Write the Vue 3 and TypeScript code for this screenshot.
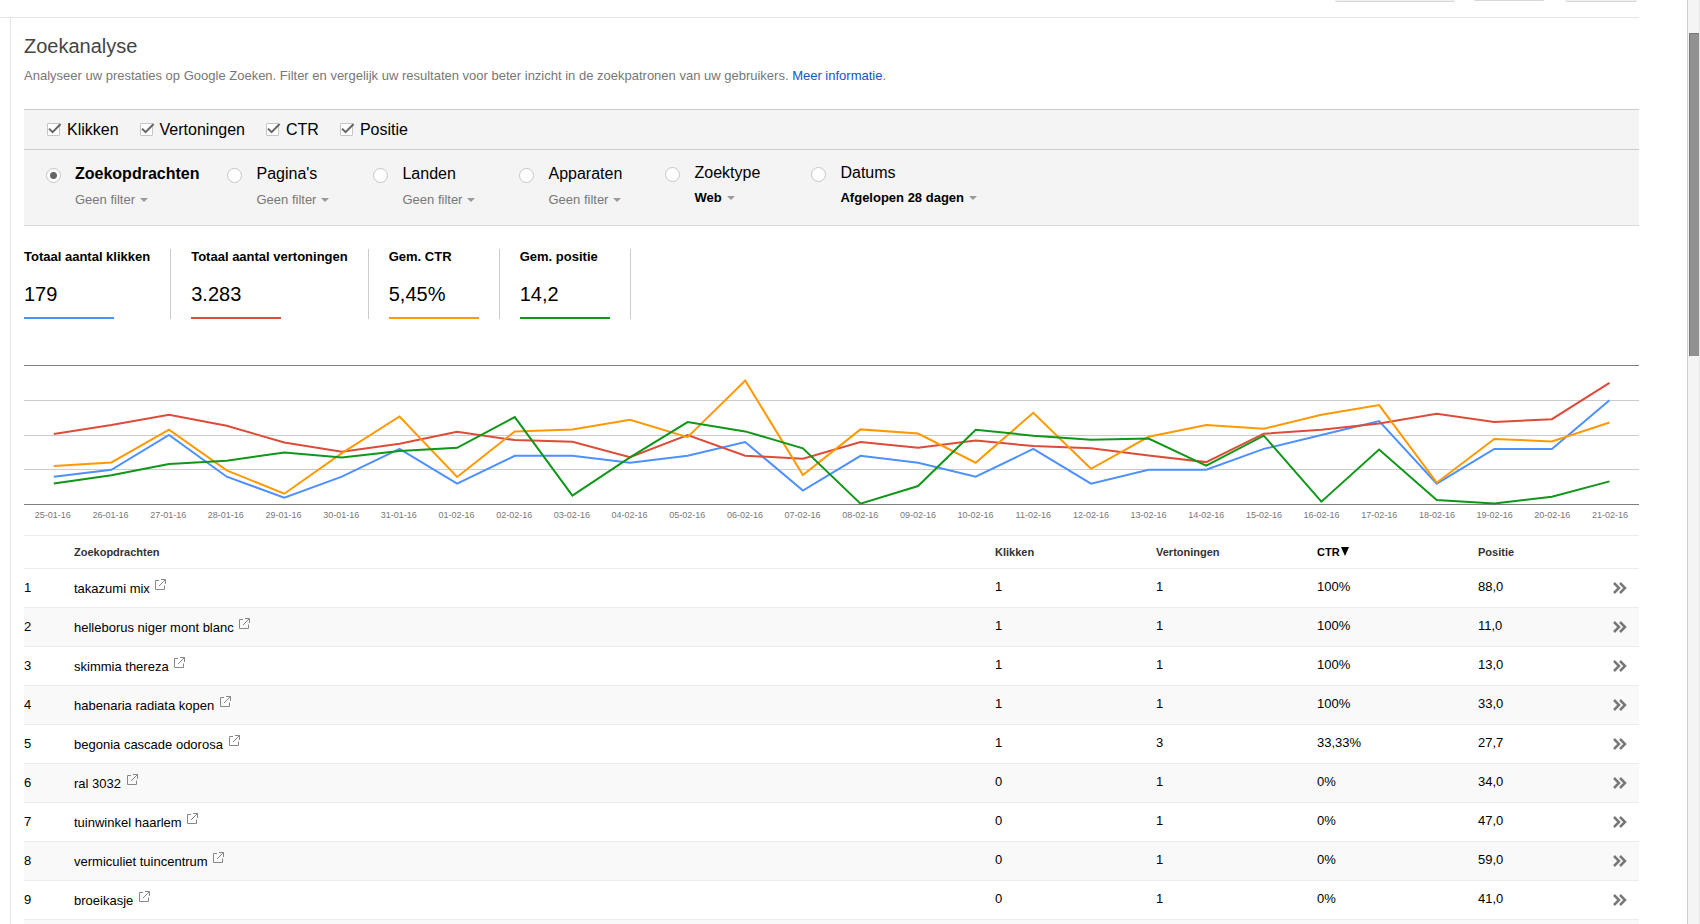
<script setup lang="ts">
import { ref } from 'vue'

const metrics = ref([
  { id: 'klikken', label: 'Klikken', on: true },
  { id: 'vertoningen', label: 'Vertoningen', on: true },
  { id: 'ctr', label: 'CTR', on: true },
  { id: 'positie', label: 'Positie', on: true },
])

const dimension = ref('queries')
const dimensions = [
  { id: 'queries', label: 'Zoekopdrachten', value: 'Geen filter', active: false },
  { id: 'pages', label: "Pagina's", value: 'Geen filter', active: false },
  { id: 'countries', label: 'Landen', value: 'Geen filter', active: false },
  { id: 'devices', label: 'Apparaten', value: 'Geen filter', active: false },
  { id: 'type', label: 'Zoektype', value: 'Web', active: true },
  { id: 'dates', label: 'Datums', value: 'Afgelopen 28 dagen', active: true },
]

const totals = [
  { label: 'Totaal aantal klikken', value: '179', tone: 'blue' },
  { label: 'Totaal aantal vertoningen', value: '3.283', tone: 'red' },
  { label: 'Gem. CTR', value: '5,45%', tone: 'orange' },
  { label: 'Gem. positie', value: '14,2', tone: 'green' },
]

// Every series is expressed as a percentage of the chart height.
const clicks = [4, 5, 10, 4, 1, 4, 8, 3, 7, 7, 6, 7, 9, 2, 7, 6, 4, 8, 3, 5, 5, 8, 10, 12, 3, 8, 8, 15]
const series = [
  { tone: 'blue', values: clicks.map((n) => n * 5) },
  { tone: 'red', values: [50.7, 57.1, 64.5, 56.6, 44.7, 38, 43.7, 52.3, 46.3, 45.1, 34.1, 49.9, 35.1, 32.9, 44.9, 40.8, 46.1, 42, 40.4, 35.3, 30.5, 50.9, 53.8, 58.3, 65.3, 59.3, 61.4, 87.5] },
  { tone: 'orange', values: [27.7, 30.3, 53.8, 24.5, 7.8, 37, 63.3, 19.8, 52.6, 54, 61, 48.5, 89.2, 21.2, 54, 51.1, 30.1, 66, 25.7, 48.7, 57.1, 54.5, 64.5, 71.5, 15.7, 47.1, 45.4, 59] },
  { tone: 'green', values: [15.2, 21, 29.1, 31.5, 37.5, 33.9, 38.4, 40.8, 62.9, 6.3, 33.9, 59.3, 52.6, 40.4, 0.6, 13.3, 53.8, 49.5, 46.6, 47.5, 27.9, 49.5, 2, 39.6, 3.2, 0.8, 5.6, 16.6] },
]

const points = (values: number[]): string =>
  values.map((v, i) => `${(29.8 + i * 57.62).toFixed(1)},${(139.5 - v * 1.39).toFixed(1)}`).join(' ')

const gridLines = [0.5, 35.5, 70.5, 104.5, 139.5]

const pad = (n: number): string => String(n).padStart(2, '0')
const days = Array.from({ length: 28 }, (_, i) =>
  i < 7 ? `${pad(25 + i)}-01-16` : `${pad(i - 6)}-02-16`,
)

const rows = [
  { query: 'takazumi mix', clicks: '1', impressions: '1', ctr: '100%', position: '88,0' },
  { query: 'helleborus niger mont blanc', clicks: '1', impressions: '1', ctr: '100%', position: '11,0' },
  { query: 'skimmia thereza', clicks: '1', impressions: '1', ctr: '100%', position: '13,0' },
  { query: 'habenaria radiata kopen', clicks: '1', impressions: '1', ctr: '100%', position: '33,0' },
  { query: 'begonia cascade odorosa', clicks: '1', impressions: '3', ctr: '33,33%', position: '27,7' },
  { query: 'ral 3032', clicks: '0', impressions: '1', ctr: '0%', position: '34,0' },
  { query: 'tuinwinkel haarlem', clicks: '0', impressions: '1', ctr: '0%', position: '47,0' },
  { query: 'vermiculiet tuincentrum', clicks: '0', impressions: '1', ctr: '0%', position: '59,0' },
  { query: 'broeikasje', clicks: '0', impressions: '1', ctr: '0%', position: '41,0' },
]
</script>

<template>
  <div class="page">
    <div class="main">
      <div class="toolbar">
        <span class="tool wide"></span>
        <span class="tool flat"></span>
        <span class="tool"></span>
      </div>
      <main class="content">
        <h1>Zoekanalyse</h1>
        <p class="intro">
          Analyseer uw prestaties op Google Zoeken. Filter en vergelijk uw resultaten voor beter inzicht in de zoekpatronen van uw gebruikers.
          <a href="#">Meer informatie</a>.
        </p>

        <section class="panel">
          <div class="metrics">
            <label v-for="m in metrics" :key="m.id" class="metric">
              <span class="check">
                <input v-model="m.on" type="checkbox" />
                <svg v-if="m.on" width="15" height="13" viewBox="0 0 15 13">
                  <path d="M2 5.6 L5.6 9.2 L13.6 1" fill="none" stroke="#666" stroke-width="2" />
                </svg>
              </span>
              {{ m.label }}
            </label>
          </div>
          <div class="dimensions">
            <div v-for="d in dimensions" :key="d.id" class="dimension" :class="{ active: d.active }">
              <input :id="d.id" v-model="dimension" type="radio" name="dimension" :value="d.id" />
              <div class="choice">
                <label :for="d.id" :class="{ chosen: dimension === d.id }">{{ d.label }}</label>
                <button type="button" class="filter">{{ d.value }}<span class="caret"></span></button>
              </div>
            </div>
          </div>
        </section>

        <section class="totals">
          <div v-for="t in totals" :key="t.label" class="total">
            <div class="total-label">{{ t.label }}</div>
            <div class="total-value">{{ t.value }}</div>
            <div class="bar" :class="t.tone"></div>
          </div>
        </section>

        <section class="chart">
          <svg viewBox="0 0 1615 140" preserveAspectRatio="none">
            <line
              v-for="(y, i) in gridLines"
              :key="y"
              x1="0"
              x2="1615"
              :y1="y"
              :y2="y"
              :class="i === 0 || i === 4 ? 'edge' : 'grid'"
            />
            <polyline v-for="s in series" :key="s.tone" :points="points(s.values)" :class="s.tone" />
          </svg>
          <div class="days">
            <span v-for="d in days" :key="d">{{ d }}</span>
          </div>
        </section>

        <table>
          <colgroup>
            <col class="c-index" />
            <col />
            <col class="c-num" />
            <col class="c-num" />
            <col class="c-num" />
            <col class="c-pos" />
            <col class="c-go" />
          </colgroup>
          <thead>
            <tr>
              <th></th>
              <th>Zoekopdrachten</th>
              <th>Klikken</th>
              <th>Vertoningen</th>
              <th class="sorted">
                CTR<svg width="8" height="9" viewBox="0 0 8 9"><path d="M0 0H8L4 9Z" fill="#000" /></svg>
              </th>
              <th>Positie</th>
              <th></th>
            </tr>
          </thead>
          <tbody>
            <tr v-for="(r, i) in rows" :key="r.query">
              <td class="index">{{ i + 1 }}</td>
              <td class="query">
                {{ r.query }}
                <a href="#" :aria-label="r.query">
                  <svg width="11" height="11" viewBox="0 0 11 11" fill="none" stroke="#888">
                    <path d="M4 1.5H0.5V10.5H9.5V6.5" />
                    <path d="M6 0.5H10.5V5M10.5 0.5L4 7" />
                  </svg>
                </a>
              </td>
              <td class="num">{{ r.clicks }}</td>
              <td class="num">{{ r.impressions }}</td>
              <td class="num">{{ r.ctr }}</td>
              <td class="num">{{ r.position }}</td>
              <td class="go">
                <button type="button" aria-label="Details">
                  <svg width="14" height="12" viewBox="0 0 14 12" fill="none" stroke="#777" stroke-width="2.5">
                    <path d="M1 1L6 6L1 11M7 1L12 6L7 11" />
                  </svg>
                </button>
              </td>
            </tr>
            <tr class="next"><td colspan="7"></td></tr>
          </tbody>
        </table>
      </main>
    </div>
    <div class="scroll"><div class="thumb"></div></div>
  </div>
</template>

<style>
body {
  margin: 0;
  background: #fff;
}
</style>

<style scoped>
.page {
  display: flex;
  height: 100vh;
  overflow: hidden;
  font-family: Arial, 'Liberation Sans', sans-serif;
  font-size: 13px;
  line-height: 16px;
  color: #000;
}
.main {
  flex: 1;
  min-width: 0;
  padding-right: 48px;
}
.toolbar {
  display: flex;
  justify-content: flex-end;
  align-items: flex-start;
  height: 17px;
  padding-right: 2px;
  border-bottom: 1px solid #e5e5e5;
}
.tool {
  box-sizing: border-box;
  width: 72px;
  height: 2px;
  border-bottom: 1px solid #d8d8d8;
  border-radius: 0 0 2px 2px;
  background: #f0f0f0;
}
.tool.wide {
  width: 120px;
}
.tool.flat {
  height: 1px;
  width: 70px;
  margin: 0 21px 0 19px;
}
.content {
  margin-left: 10px;
  padding: 16px 0 0 13px;
  border-left: 1px solid #e5e5e5;
}
h1 {
  margin: 0;
  font-size: 20px;
  font-weight: 400;
  line-height: 24px;
  color: #444;
}
.intro {
  margin: 10px 0 0;
  color: #777;
}
a {
  color: #15c;
  text-decoration: none;
}
.panel {
  margin-top: 25px;
  background: #f4f4f4;
  border-top: 1px solid #ccc;
  border-bottom: 1px solid #dadada;
}
.metrics {
  display: flex;
  gap: 21px;
  align-items: center;
  height: 39px;
  padding-left: 23px;
  border-bottom: 1px solid #ccc;
  font-size: 16px;
}
.metric {
  display: flex;
  align-items: center;
  gap: 7px;
}
.check {
  position: relative;
  display: flex;
}
.check svg {
  position: absolute;
  left: 0;
  top: 0;
  pointer-events: none;
}
input {
  appearance: none;
  box-sizing: border-box;
  width: 13px;
  height: 13px;
  margin: 0;
  border: 1px solid #c6c6c6;
  border-radius: 1px;
  background: #fff;
}
.dimensions {
  display: flex;
  height: 61px;
  padding: 14px 0 0 22px;
}
.dimension {
  display: flex;
  min-width: 146px;
  gap: 14px;
  padding-top: 1px;
}
.dimension.active {
  padding-top: 0;
}
input[type='radio'] {
  width: 15px;
  height: 15px;
  margin-top: 3px;
  border-radius: 50%;
}
input[type='radio']:checked {
  background: radial-gradient(circle, #666 3px, #fff 4px);
}
.choice {
  display: flex;
  flex-direction: column;
  align-items: flex-start;
  gap: 9px;
  padding-right: 28px;
}
.choice label {
  font-size: 16px;
  line-height: 18px;
}
.choice .chosen {
  font-weight: 700;
}
.filter {
  display: flex;
  align-items: center;
  gap: 5px;
  padding: 0;
  border: 0;
  background: none;
  font: inherit;
  color: #777;
  white-space: nowrap;
}
.active .choice {
  gap: 8px;
}
.active .filter {
  font-weight: 700;
  color: #000;
}
.caret {
  border: 4px solid transparent;
  border-top-color: #999;
  border-bottom: 0;
}
.totals {
  display: flex;
  margin-top: 23px;
}
.total {
  padding: 0 20px;
  border-right: 1px solid #ccc;
}
.total:first-child {
  padding-left: 0;
}
.total-label {
  font-weight: 700;
}
.total-value {
  margin: 17px 0 11px;
  font-size: 20px;
  line-height: 24px;
}
.bar {
  width: 90px;
  height: 2px;
}
.bar.blue { background: #4d90fe; }
.bar.red { background: #dd4b39; }
.bar.orange { background: #ff9900; }
.bar.green { background: #109618; }
.chart {
  margin-top: 46px;
}
.chart svg {
  display: block;
  width: 100%;
  height: 140px;
}
.chart line {
  stroke: #ccc;
  shape-rendering: crispEdges;
}
.chart line.edge {
  stroke: #808080;
}
.chart polyline {
  fill: none;
  stroke-width: 2;
  vector-effect: non-scaling-stroke;
}
polyline.blue { stroke: #4d90fe; }
polyline.red { stroke: #dd4b39; }
polyline.orange { stroke: #ff9900; }
polyline.green { stroke: #109618; }
.days {
  display: flex;
  margin-top: 2px;
  font-size: 9px;
  color: #777;
}
.days span {
  flex: 1 0 0;
  text-align: center;
}
table {
  width: 100%;
  margin-top: 12px;
  border-collapse: collapse;
  table-layout: fixed;
}
.c-index { width: 50px; }
.c-num { width: 161px; }
.c-pos { width: 135px; }
.c-go { width: 26px; }
tr {
  border-top: 1px solid #ebebeb;
}
th {
  height: 32px;
  padding: 0;
  text-align: left;
  font-size: 11px;
  color: #333;
}
th.sorted {
  color: #000;
}
th svg {
  margin-left: 1px;
}
td {
  height: 38px;
  padding: 0;
}
.index {
  padding-bottom: 1px;
  height: 37px;
}
.num {
  padding-bottom: 3px;
  height: 35px;
}
.query a svg {
  margin: 0 0 3px 2px;
}
tbody tr:nth-child(even) {
  background: #f9f9f9;
}
.go button {
  display: block;
  padding: 0;
  border: 0;
  background: none;
}
.go svg {
  display: block;
}
.scroll {
  box-sizing: border-box;
  width: 13px;
  padding: 33px 0 0 1px;
  border-left: 1px solid #ccc;
  border-right: 1px solid #e5e5e5;
  background: #f4f4f4;
}
.thumb {
  box-sizing: border-box;
  height: 323px;
  border-top: 1px solid #777;
  border-left: 1px solid #777;
  background: #919191;
}
</style>
